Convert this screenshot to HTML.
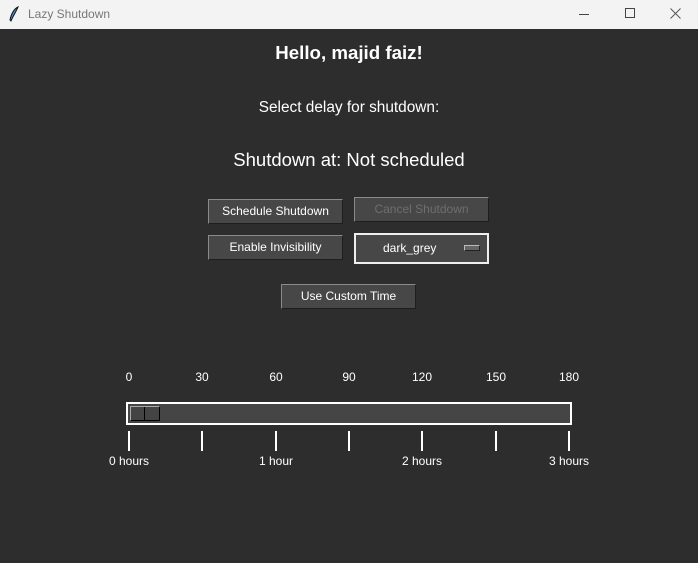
<!DOCTYPE html>
<html><head><style>
*{margin:0;padding:0;box-sizing:border-box}
body{width:698px;height:563px;background:#2d2d2d;font-family:"Liberation Sans",sans-serif;position:relative;overflow:hidden;color:#fff}
.tb{position:absolute;left:0;top:0;width:698px;height:29px;background:#f3f3f3;color:#777;font-size:12px}
.a{position:absolute}
.t{position:absolute;white-space:nowrap;transform:translateX(-50%)}
.btn{position:absolute;background:#474747;border:1px solid #8a8a8a;border-right-color:#1e1e1e;border-bottom-color:#1e1e1e;font-size:12px;color:#fff;text-align:center}
.tick{position:absolute;width:2px;height:20px;background:#fff;top:431px}
</style></head><body>
<div class="tb">
<svg class="a" style="left:8px;top:6px" width="12" height="17" viewBox="0 0 12 17"><path d="M10 1 C6 3 3 8 2 14 L3 15 C5 10 8 6 10 1Z" fill="#4a8ad4" stroke="#111" stroke-width="1"/></svg>
<div class="a" style="left:28px;top:7px">Lazy Shutdown</div>
<div class="a" style="left:579px;top:14px;width:10px;height:1px;background:#444"></div>
<div class="a" style="left:625px;top:8px;width:10px;height:10px;border:1px solid #444"></div>
<svg class="a" style="left:670px;top:8px" width="11" height="11"><path d="M0.5 0.5L10.5 10.5M10.5 0.5L0.5 10.5" stroke="#555" stroke-width="1"/></svg>
</div>
<div class="t" style="left:349px;top:42px;font-size:18.7px;font-weight:bold">Hello, majid faiz!</div>
<div class="t" style="left:349px;top:99px;font-size:15.4px">Select delay for shutdown:</div>
<div class="t" style="left:349px;top:149px;font-size:18.5px">Shutdown at: Not scheduled</div>
<div class="btn" style="left:208px;top:199px;width:135px;height:25px;line-height:23px">Schedule Shutdown</div>
<div class="btn" style="left:354px;top:197px;width:135px;height:25px;line-height:23px;color:#6e6e6e">Cancel Shutdown</div>
<div class="btn" style="left:208px;top:235px;width:135px;height:25px;line-height:23px">Enable Invisibility</div>
<div class="a" style="left:354px;top:233px;width:135px;height:31px;border:2px solid #eee;background:#474747;font-size:12px;line-height:27px;padding-left:27px">dark_grey
<div class="a" style="left:108px;top:10px;width:16px;height:6px;background:#666;border:1px solid #bbb;border-right-color:#222;border-bottom-color:#222"></div></div>
<div class="btn" style="left:281px;top:284px;width:135px;height:25px;line-height:23px">Use Custom Time</div>
<div class="t" style="left:129px;top:370px;font-size:12px">0</div>
<div class="t" style="left:202px;top:370px;font-size:12px">30</div>
<div class="t" style="left:276px;top:370px;font-size:12px">60</div>
<div class="t" style="left:349px;top:370px;font-size:12px">90</div>
<div class="t" style="left:422px;top:370px;font-size:12px">120</div>
<div class="t" style="left:496px;top:370px;font-size:12px">150</div>
<div class="t" style="left:569px;top:370px;font-size:12px">180</div>
<div class="a" style="left:126px;top:402px;width:446px;height:23px;border:2px solid #fff;background:#454545">
<div class="a" style="left:2px;top:2px;width:30px;height:15px;background:#444;border:1px solid #aaa;border-right-color:#000;border-bottom-color:#000"><div class="a" style="left:13px;top:0;width:1px;height:13px;background:#000"></div></div>
</div>
<div class="tick" style="left:128px"></div><div class="tick" style="left:201px"></div><div class="tick" style="left:275px"></div><div class="tick" style="left:348px"></div><div class="tick" style="left:421px"></div><div class="tick" style="left:495px"></div><div class="tick" style="left:568px"></div>
<div class="t" style="left:129px;top:454px;font-size:12px">0 hours</div>
<div class="t" style="left:276px;top:454px;font-size:12px">1 hour</div>
<div class="t" style="left:422px;top:454px;font-size:12px">2 hours</div>
<div class="t" style="left:569px;top:454px;font-size:12px">3 hours</div>
</body></html>
